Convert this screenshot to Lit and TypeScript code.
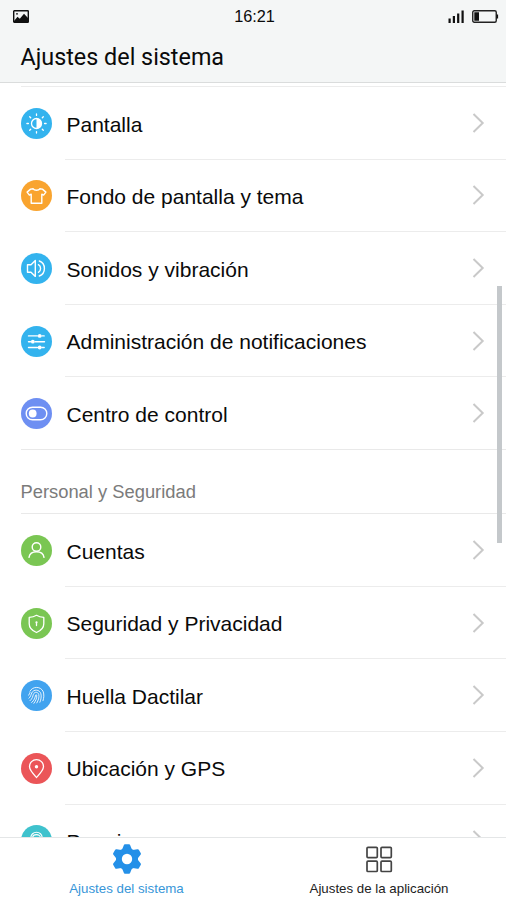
import { LitElement, html, css, svg } from "lit";
import { customElement, property } from "lit/decorators.js";

type Item = { icon: string; label: string; color: string };

const glyphs: Record<string, unknown> = {
  display: svg`<g fill="none" stroke="#fff" stroke-width="1.3" stroke-linecap="round">
    <circle cx="15.5" cy="15.5" r="5"/>
    <path d="M15.5 5.9v1.5M15.5 23.6v1.5M5.9 15.5h1.5M23.6 15.5h1.5M8.7 8.7l1 1M21.3 21.3l1 1M8.7 22.3l1-1M21.3 9.7l1-1"/></g>
    <path d="M15.5 10.5a5 5 0 0 1 0 10z" fill="#fff"/>`,
  shirt: svg`<path d="M12.2 8.8c1 1.9 5.6 1.9 6.6 0l2.6.3 3.5 3-2.3 3-1.8-.9v9.100h-10.600v-9.100l-1.800.9-2.300-3 3.500-3z" fill="none" stroke="#fff" stroke-width="1.4" stroke-linejoin="round"/>`,
  sound: svg`<path d="M6.500 11.800h3.500l4.300-4.200v15.800l-4.300-4.200H6.500zM17.400 11.700c2.900 1.500 2.900 6.100 0 7.600M18.300 8c6.800 2.500 6.800 12.500 0 15" fill="none" stroke="#fff" stroke-width="1.400" stroke-linejoin="round" stroke-linecap="round"/>`,
  sliders: svg`<path d="M7.500 9.900h9M20.800 9.900h2.400M7.500 15.700h2M14 15.700h9.500M7.500 21.500h9M20.800 21.500h2.400" stroke="#fff" stroke-width="1.400" stroke-linecap="round"/>
    <g fill="#fff"><circle cx="18.700" cy="9.900" r="1.900"/><circle cx="11.800" cy="15.700" r="1.900"/><circle cx="18.700" cy="21.500" r="1.900"/></g>`,
  toggle: svg`<rect x="5.200" y="9.200" width="20.600" height="12.600" rx="6.300" fill="none" stroke="#fff" stroke-width="1.400"/><circle cx="11.700" cy="15.500" r="3.900" fill="#fff"/>`,
  person: svg`<g fill="none" stroke="#fff" stroke-width="1.400" stroke-linecap="round"><circle cx="15.500" cy="12" r="4.300"/><path d="M8 22.300c1.200-7.400 13.800-7.400 15 0"/></g>`,
  shield: svg`<path d="M15.500 7.300c2.200 1.400 4.700 2 7.300 2.100v6.300c0 4.100-2.800 6.900-7.300 8.800-4.500-1.900-7.300-4.700-7.300-8.800V9.400c2.600-.1 5.100-.7 7.300-2.100z" fill="none" stroke="#fff" stroke-width="1.300" stroke-linejoin="round"/><path d="M15.500 14.800v2.800" stroke="#fff" stroke-width="1.300" stroke-linecap="round"/><circle cx="15.500" cy="14.300" r="1.100" fill="#fff"/>`,
  finger: svg`<path d="M9 11.200C11.500 6 20 6 22.300 11.900c.8 2.600.7 6-.3 8.800M7.700 15.200c.6-.9.900-1.900 1.300-2.700M8 18.200c1.700-1.400 1.900-3.500 2.700-5.200 1.900-4.100 7.900-3.700 9.200.8.700 2.700.1 5.900-1 8.400M9 20.700c2.600-2 2.600-4.300 3.400-6.400 1.100-2.900 4.800-2.500 5.400.3.600 2.900-.5 5.800-2 8.300M10.700 22.500c2.800-2.300 3.300-4.900 3.900-7.300.1-.6 1-.6 1.100 0 .4 2.800-1 5.600-2.800 8.100" fill="none" stroke="#fff" stroke-width=".95" stroke-linecap="round" opacity=".9"/>`,
  pin: svg`<path d="M15.500 24.500c-2.800-3-7-7.200-7-10.900a7 7 0 0 1 14 0c0 3.700-4.200 7.900-7 10.900z" fill="none" stroke="#fff" stroke-width="1.300" stroke-linejoin="round"/><circle cx="15.500" cy="13.700" r="1.700" fill="#fff"/>`,
  lock: svg`<path d="M11.700 14v-1.700a3.800 2.700 0 0 1 7.600 0v1.700M9.900 14v-1.700a5.600 5 0 0 1 11.200 0v1.700M8.500 14h14v8.500h-14z" fill="none" stroke="#fff" stroke-width="1.100"/>`,
};

@customElement("settings-row")
export class SettingsRow extends LitElement {
  @property() icon = "";
  @property() label = "";
  @property() color = "";

  static styles = css`
    :host { display: flex; height: 72.6px; flex: none; padding-left: 20.700px; box-sizing: border-box; }
    .icon { width: 31px; height: 31px; align-self: center; margin-right: 13.300px; flex: none; overflow: visible; }
    .body { flex: 1; display: flex; align-items: center; justify-content: space-between; border-bottom: 1px solid #ececec; padding-right: 21px; }
    :host([last]) .body { border-bottom-color: transparent; }
    .label { font-size: 21px; line-height: 24px; padding: 3.500px 0 0 1.500px; color: #0a0a0a; white-space: nowrap; }
    .chevron { width: 13px; height: 20px; flex: none; }
  `;

  render() {
    return html`
      <svg class="icon" viewBox="0 0 31 31"><circle cx="15.500" cy="15.500" r="15.500" fill=${this.color}></circle>${glyphs[this.icon]}</svg>
      <div class="body">
        <span class="label">${this.label}</span>
        <svg class="chevron" viewBox="0 0 13 20"><path d="M1.500 1l9.200 9-9.200 9" fill="none" stroke="#c9c9c9" stroke-width="2"/></svg>
      </div>`;
  }
}

@customElement("app-root")
export class AppRoot extends LitElement {
  static styles = css`
    :host { display: flex; flex-direction: column; width: 100%; height: 899px; position: relative; overflow: hidden; background: #fff; font-family: "Liberation Sans", Arial, sans-serif; color: #0a0a0a; }
    .header { height: 82px; flex: none; background: #f4f6f6; border-bottom: 1px solid #dadcdc; }
    .status { height: 32px; display: grid; grid-template-columns: 1fr auto 1fr; align-items: center; padding: 0 7px 0 13px; }
    .time { font-size: 16.300px; line-height: 18px; padding-bottom: 1px; margin-right: 3px; }
    .photo { width: 16px; height: 13px; }
    .indicators { display: flex; justify-content: flex-end; gap: 7px; }
    .signal { width: 17px; height: 13px; }
    .battery { width: 27px; height: 13px; }
    .title { margin: 9px 0 0 20.500px; font: 400 23.350px/32px Roboto, sans-serif; white-space: nowrap; }
    .list { flex: 1; min-height: 0; overflow: hidden; display: flex; flex-direction: column; }
    .lead { height: 3px; flex: none; margin-left: 21px; border-bottom: 1px solid #ececec; }
    .section { height: 65.200px; flex: none; box-sizing: border-box; margin-left: 20.500px; margin-top: -1px; border-top: 1px solid #e9e9e9; border-bottom: 1px solid #e9e9e9; padding-top: 31px; font-size: 18.350px; line-height: 21px; color: #7b7b7b; }
    .thumb { position: absolute; right: 4px; top: 286px; width: 5px; height: 257px; background: #c4c8cb; }
    .tabs { height: 61px; flex: none; display: grid; grid-template-columns: 1fr 1fr; border-top: 1px solid #e4e6e7; background: #fff; }
    .tab { display: flex; flex-direction: column; align-items: center; font-size: 13.300px; line-height: 16px; color: #222; white-space: nowrap; padding-right: 1px; }
    .tab.active { color: #3796d8; padding-right: 0; }
    .tabicon { width: 30px; height: 30px; margin: 6px 0 7px; }
  `;

  private device: Item[] = [
    { icon: "display", label: "Pantalla", color: "#33b3ee" },
    { icon: "shirt", label: "Fondo de pantalla y tema", color: "#f9a42f" },
    { icon: "sound", label: "Sonidos y vibración", color: "#33b3ee" },
    { icon: "sliders", label: "Administración de notificaciones", color: "#33b3ee" },
    { icon: "toggle", label: "Centro de control", color: "#6e8ff2" },
  ];

  private personal: Item[] = [
    { icon: "person", label: "Cuentas", color: "#7ac653" },
    { icon: "shield", label: "Seguridad y Privacidad", color: "#7ac653" },
    { icon: "finger", label: "Huella Dactilar", color: "#41a3ef" },
    { icon: "pin", label: "Ubicación y GPS", color: "#eb5558" },
    { icon: "lock", label: "Permisos", color: "#3fc2cd" },
  ];

  private row(item: Item, last = false) {
    return html`<settings-row icon=${item.icon} label=${item.label} color=${item.color} ?last=${last}></settings-row>`;
  }

  render() {
    const teeth = [0, 60, 120, 180, 240, 300];
    return html`
      <div class="header">
        <div class="status">
          <svg class="photo" viewBox="0 0 16 13"><rect x=".700" y=".700" width="14.600" height="11.600" rx=".6" fill="none" stroke="#111" stroke-width="1.400"/><path d="M1 11l3.500-4.300 2.300 2 4.200-4.900L15 8v4.500H1z" fill="#111"/><circle cx="4" cy="3.800" r=".9" fill="#111"/></svg>
          <span class="time">16:21</span>
          <div class="indicators">
            <svg class="signal" viewBox="0 0 17 13"><path d="M.5 8.500h2.200V13H.5zM4.800 6H7v7H4.800zM9.100 3.500h2.200V13H9.100zM13.500 .5h2.200V13h-2.200z" fill="#111"/></svg>
            <svg class="battery" viewBox="0 0 27 13"><rect x=".750" y=".750" width="23.500" height="11.500" rx="1.500" fill="none" stroke="#222" stroke-width="1.400"/><path d="M2.300 2.300h4.700v8.400H2.300zM24.500 4.500h1.600v4h-1.600z" fill="#111"/></svg>
          </div>
        </div>
        <div class="title">Ajustes del sistema</div>
      </div>
      <div class="list">
        <div class="lead"></div>
        ${this.device.map((i, n) => this.row(i, n === this.device.length - 1))}
        <div class="section">Personal y Seguridad</div>
        ${this.personal.map((i) => this.row(i))}
      </div>
      <div class="tabs">
        <div class="tab active">
          <svg class="tabicon" viewBox="-15 -15 30 30"><g fill="#2490e8">
            ${teeth.map((a) => svg`<path transform="rotate(${a})" d="M-5.500 -8L-3.200 -13.800Q-2.900 -14.800 -2 -14.800H2Q2.900 -14.800 3.200 -13.800L5.500 -8Z"/>`)}
            <circle r="11"/></g><circle r="5.200" fill="#fff"/></svg>
          <span>Ajustes del sistema</span>
        </div>
        <div class="tab">
          <svg class="tabicon" viewBox="0 0 30 30"><g fill="none" stroke="#444" stroke-width="1.700"><rect x="3" y="3.300" width="10.300" height="10.300" rx="1"/><rect x="17" y="3.300" width="10.300" height="10.300" rx="1"/><rect x="3" y="17.200" width="10.300" height="10.300" rx="1"/><rect x="17" y="17.200" width="10.300" height="10.300" rx="1"/></g></svg>
          <span>Ajustes de la aplicación</span>
        </div>
      </div>
      <div class="thumb"></div>`;
  }
}
